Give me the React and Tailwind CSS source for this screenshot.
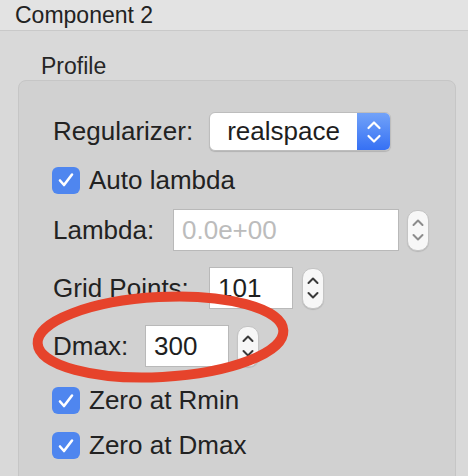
import React from 'react';

const font = { fontFamily: '"Liberation Sans", Arial, sans-serif' };

const Check = () => (
    <div className="w-[28px] h-[27px] rounded-[6px] bg-[#4f86ef] flex items-center justify-center shrink-0">
        <svg width="18" height="16" viewBox="0 0 18 16" fill="none">
            <path d="M3 8.5 L7 13 L15 2.5" stroke="#fff" strokeWidth="2.6" strokeLinecap="round" strokeLinejoin="round" />
        </svg>
    </div>
);

const Stepper = ({ dim }) => (
    <div className="w-[22px] h-[41px] rounded-[10px] bg-[#f7f7f7] border border-[#c4c4c4] shadow-[0_1px_1px_rgba(0,0,0,0.12)] flex items-center justify-center shrink-0">
        <svg width="14" height="28" viewBox="0 0 14 28" fill="none">
            <path d="M2.5 9 L7 4.5 L11.5 9" stroke={dim ? '#8c8c8c' : '#3a3a3a'} strokeWidth="2" strokeLinecap="round" strokeLinejoin="round" />
            <path d="M2.5 19 L7 23.5 L11.5 19" stroke={dim ? '#8c8c8c' : '#3a3a3a'} strokeWidth="2" strokeLinecap="round" strokeLinejoin="round" />
        </svg>
    </div>
);

const Field = ({ value, width, placeholder }) => (
    <div className={`h-[42px] bg-white border border-[#b9b9b9] flex items-center pl-[8px] shrink-0 ${width}`}>
        <span className={placeholder ? 'text-[#bcbcbc]' : 'text-[#1e1e1e]'}>{value}</span>
    </div>
);

const App = () => {
    return (
        <div className="relative w-[468px] h-[476px] overflow-hidden bg-[#d9d9d9] text-[#222]" style={font}>
            {/* title bar */}
            <div className="h-[31px] bg-[#e3e3e3] border-b border-[#c9c9c9] pl-[15px] text-[23px] leading-[30px]">
                Component 2
            </div>

            <div className="mt-[21px] h-[28px] pl-[41px] text-[23px] leading-[28px] text-[#262626]">Profile</div>

            {/* group box */}
            <div className="ml-[18px] w-[438px] h-[420px] rounded-[8px] bg-[#d1d1d1] border border-[#c6c6c6] pt-[31px] pl-[34px] text-[26px]">
                <div className="h-[39px] flex items-center gap-4">
                    <span>Regularizer:</span>
                    <div className="w-[182px] h-[39px] rounded-[6px] bg-white border border-[#bdbdbd] shadow-[0_1px_1px_rgba(0,0,0,0.15)] flex overflow-hidden">
                        <div className="flex-1 flex items-center pl-[17px] text-[#1e1e1e]">realspace</div>
                        <div className="w-[33px] bg-gradient-to-b from-[#72a2f8] to-[#3670f4] flex items-center justify-center">
                            <svg width="16" height="28" viewBox="0 0 16 28" fill="none">
                                <path d="M2.5 10 L8 4.5 L13.5 10" stroke="#fff" strokeWidth="2.2" strokeLinecap="round" strokeLinejoin="round" />
                                <path d="M2.5 18 L8 23.5 L13.5 18" stroke="#fff" strokeWidth="2.2" strokeLinecap="round" strokeLinejoin="round" />
                            </svg>
                        </div>
                    </div>
                </div>

                <div className="mt-[15px] h-[28px] flex items-center gap-[9px] -ml-[1px]">
                    <Check />
                    <span>Auto lambda</span>
                </div>

                <div className="mt-[15px] h-[42px] flex items-center">
                    <span className="w-[120px]">Lambda:</span>
                    <Field value="0.0e+00" width="w-[226px]" placeholder />
                    <div className="ml-[8px]"><Stepper dim /></div>
                </div>

                <div className="mt-[16px] h-[42px] flex items-center">
                    <span className="w-[156px]">Grid Points:</span>
                    <Field value="101" width="w-[84px]" />
                    <div className="ml-[9px]"><Stepper /></div>
                </div>

                <div className="mt-[16px] h-[42px] flex items-center">
                    <span className="w-[92px]">Dmax:</span>
                    <Field value="300" width="w-[84px]" />
                    <div className="ml-[8px]"><Stepper /></div>
                </div>

                <div className="mt-[20px] h-[27px] flex items-center gap-[9px] -ml-[1px]">
                    <Check />
                    <span>Zero at Rmin</span>
                </div>

                <div className="mt-[18px] h-[27px] flex items-center gap-[9px] -ml-[1px]">
                    <Check />
                    <span>Zero at Dmax</span>
                </div>
            </div>

            {/* red annotation ellipse */}
            <svg className="absolute left-0 top-0 pointer-events-none" width="468" height="476">
                <ellipse cx="160.5" cy="337" rx="123" ry="40" transform="rotate(-3 160.5 337)" fill="none" stroke="#e6432b" strokeWidth="10" />
            </svg>
        </div>
    );
};

export default App;
